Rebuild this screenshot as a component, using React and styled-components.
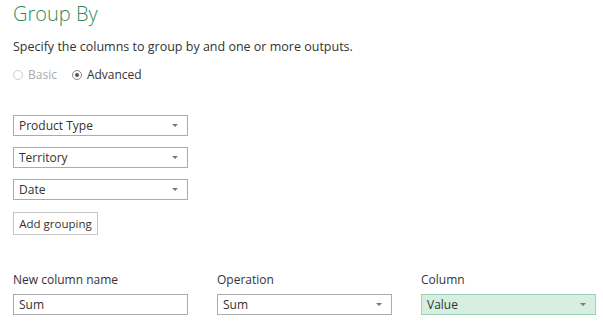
import React from 'react';
import styled, { createGlobalStyle, css } from 'styled-components';

const GlobalStyle = createGlobalStyle`
  html, body {
    margin: 0;
    padding: 0;
    background: #fff;
  }
  body {
    font-family: "Open Sans", "Noto Sans", sans-serif;
    color: #444;
  }
`

const Page = styled.div`
  width: 603px;
  height: 323px;
  box-sizing: border-box;
  padding: 0 8px 0 13px;
  overflow: hidden;
`

const Title = styled.h1`
  margin: 0;
  padding-top: 1px;
  font-size: 20px;
  line-height: 26px;
  font-weight: 300;
  color: #2f8a5c;
`

const Description = styled.p`
  margin: 11px 0 0;
  font-size: 12.5px;
  line-height: 17px;
  color: #333;
`

const ModeRow = styled.div`
  display: flex;
  gap: 15px;
  margin-top: 11px;
  height: 17px;
  align-items: center;
`

const Mode = styled.label`
  display: flex;
  align-items: center;
  gap: 5px;
  font-size: 12px;
  color: ${p => (p.disabled ? '#aaa' : '#333')};
`

const Circle = styled.span`
  width: 8px;
  height: 8px;
  border-radius: 50%;
  border: 1px solid ${p => (p.disabled ? '#ccc' : '#888')};
  display: flex;
  align-items: center;
  justify-content: center;
  ${p => p.checked && css`
    &::after {
      content: '';
      width: 4px;
      height: 4px;
      border-radius: 50%;
      background: #555;
    }
  `}
`

const Groupings = styled.div`
  display: flex;
  flex-direction: column;
  gap: 11px;
  margin-top: 32px;
  width: 175px;
`

const Select = styled.div`
  box-sizing: border-box;
  height: 21px;
  width: ${p => p.width || '175px'};
  border: 1px solid ${p => (p.highlight ? '#9ed4b4' : '#ababab')};
  background: ${p => (p.highlight ? '#d6efe0' : '#fff')};
  display: flex;
  align-items: center;
  justify-content: space-between;
  padding: 0 9px 0 5px;
  font-size: 12px;
  color: #333;
`

const Arrow = styled.span`
  width: 0;
  height: 0;
  border-left: 3px solid transparent;
  border-right: 3px solid transparent;
  border-top: 3px solid #777;
`

const Button = styled.button`
  box-sizing: border-box;
  align-self: flex-start;
  margin-top: 1px;
  height: 23px;
  width: 85px;
  padding: 0;
  border: 1px solid #c6c6c6;
  background: #fff;
  font-family: inherit;
  font-size: 11.5px;
  color: #333;
`

const Outputs = styled.div`
  display: grid;
  grid-template-columns: 175px 175px 175px;
  column-gap: 29px;
  row-gap: 6px;
  margin-top: 37px;
`

const Label = styled.div`
  font-size: 12px;
  line-height: 16px;
  color: #333;
`

const TextBox = styled.div`
  box-sizing: border-box;
  height: 21px;
  border: 1px solid #ababab;
  display: flex;
  align-items: center;
  padding: 0 5px;
  font-size: 12px;
  color: #333;
`

const groupings = ['Product Type', 'Territory', 'Date']

const App = () => {
  return <Page>
    <GlobalStyle />
    <Title>Group By</Title>
    <Description>Specify the columns to group by and one or more outputs.</Description>
    <ModeRow>
      <Mode disabled><Circle disabled />Basic</Mode>
      <Mode><Circle checked />Advanced</Mode>
    </ModeRow>
    <Groupings>
      {groupings.map(g => (
        <Select key={g}>{g}<Arrow /></Select>
      ))}
      <Button>Add grouping</Button>
    </Groupings>
    <Outputs>
      <Label>New column name</Label>
      <Label>Operation</Label>
      <Label>Column</Label>
      <TextBox>Sum</TextBox>
      <Select>Sum<Arrow /></Select>
      <Select highlight>Value<Arrow /></Select>
    </Outputs>
  </Page>
};

export default App;
